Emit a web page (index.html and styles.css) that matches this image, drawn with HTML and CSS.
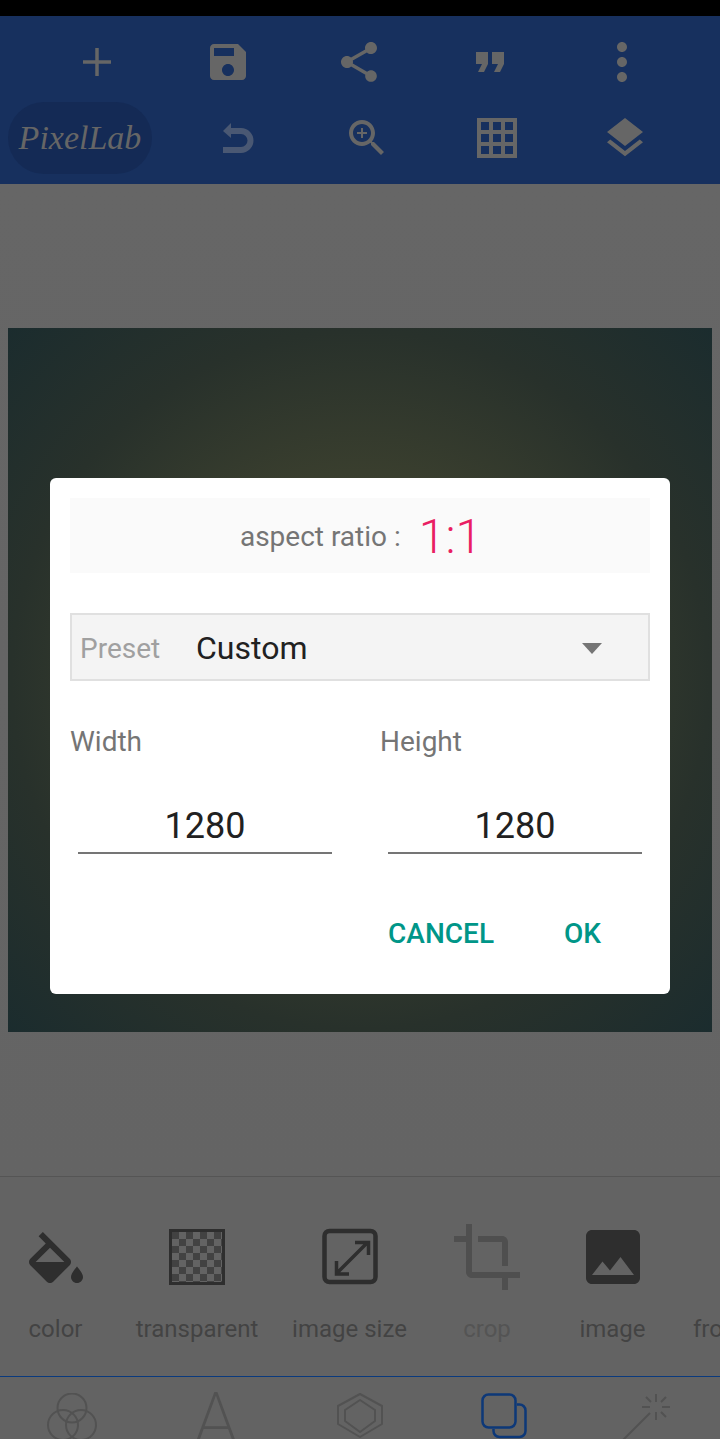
FILE: index.html
```html
<!DOCTYPE html>
<html lang="en">
<head>
    <meta charset="UTF-8">
    <meta name="viewport" content="width=device-width, initial-scale=1.0">
    <title>PixelLab</title>
    <link rel="stylesheet" href="styles.css">
</head>
<body>
<div class="app">

    <div class="status-bar"></div>

    <!-- Top toolbar, two rows of actions -->
    <header class="toolbar">
        <div class="toolbar-row toolbar-row-top">
            <svg class="icon-60" viewBox="0 0 24 24"><path d="M17.600 12.700h-4.900v4.900h-1.400v-4.900H6.400v-1.400h4.900V6.400h1.400v4.900h4.900z"/></svg>
            <svg class="icon-48" viewBox="0 0 24 24"><path d="M17 3H5c-1.110 0-2 .9-2 2v14c0 1.100.89 2 2 2h14c1.100 0 2-.9 2-2V7l-4-4zm-5 16c-1.660 0-3-1.340-3-3s1.340-3 3-3 3 1.340 3 3-1.340 3-3 3zm3-10H5V5h10v4z"/></svg>
            <svg class="icon-48" viewBox="0 0 24 24"><path d="M18 16.080c-.76 0-1.440.3-1.960.77L8.910 12.700c.05-.23.09-.46.09-.7s-.04-.47-.09-.7l7.050-4.110c.54.5 1.250.81 2.040.81 1.660 0 3-1.340 3-3s-1.340-3-3-3-3 1.340-3 3c0 .24.04.47.09.7L8.040 9.810C7.500 9.310 6.790 9 6 9c-1.660 0-3 1.340-3 3s1.340 3 3 3c.79 0 1.500-.31 2.040-.81l7.120 4.160c-.05.21-.08.43-.08.65 0 1.610 1.310 2.920 2.920 2.920 1.610 0 2.920-1.310 2.920-2.920s-1.310-2.920-2.920-2.920z"/></svg>
            <svg class="icon-48" viewBox="0 0 24 24"><path d="M6 17h3l2-4V7H5v6h3zm8 0h3l2-4V7h-6v6h3z"/></svg>
            <svg class="icon-60" viewBox="0 0 24 24"><path d="M12 8c1.100 0 2-.9 2-2s-.9-2-2-2-2 .9-2 2 .9 2 2 2zm0 2c-1.100 0-2 .9-2 2s.9 2 2 2 2-.9 2-2-.9-2-2-2zm0 6c-1.100 0-2 .9-2 2s.9 2 2 2 2-.9 2-2-.9-2-2-2z"/></svg>
        </div>
        <div class="toolbar-row toolbar-row-bottom">
            <div class="logo-pill"><span class="logo-text">PixelLab</span></div>
            <!-- undo is greyed out, nothing to undo yet -->
            <svg class="undo" viewBox="0 0 32 32">
                <polygon points="9,1 1,9 9,16"/>
                <path d="M7 9H19a9.500 9.500 0 0 1 0 19H1"/>
            </svg>
            <svg class="icon-48" viewBox="0 0 24 24"><path d="M15.500 14h-.79l-.28-.27C15.410 12.590 16 11.110 16 9.500 16 5.910 13.090 3 9.500 3S3 5.910 3 9.500 5.910 16 9.500 16c1.610 0 3.090-.59 4.230-1.570l.27.28v.79l5 4.990L20.490 19l-4.990-5zm-6 0C7.010 14 5 11.990 5 9.500S7.010 5 9.500 5 14 7.010 14 9.500 11.990 14 9.500 14z"/><path d="M12 10h-2v2H9v-2H7V9h2V7h1v2h2v1z"/></svg>
            <svg class="grid-icon" viewBox="0 0 40 40">
                <path d="M2 2h36v36H2zM14 2v36M26 2v36M2 14h36M2 26h36"/>
            </svg>
            <svg class="icon-48" viewBox="0 0 24 24"><path d="M11.990 18.540l-7.370-5.730L3 14.070l9 7 9-7-1.630-1.270-7.380 5.740zM12 16l7.360-5.730L21 9l-9-7-9 7 1.630 1.270L12 16z"/></svg>
        </div>
    </header>

    <!-- Workspace with the square canvas -->
    <main class="workspace">
        <div class="canvas"></div>
    </main>

    <!-- Options of the selected tab -->
    <section class="tray">
        <div class="tray-item">
            <svg class="tray-icon" viewBox="0 -3.670 24 24"><path d="M16.560 8.940L7.620 0 6.210 1.410l2.380 2.380-5.150 5.150c-.59.59-.59 1.540 0 2.120l5.500 5.500c.29.29.68.44 1.060.44s.77-.15 1.060-.44l5.500-5.500c.59-.58.59-1.530 0-2.110zM5.210 10L10 5.210 14.790 10H5.210zM19 11.500s-2 2.170-2 3.500c0 1.100.9 2 2 2s2-.9 2-2c0-1.330-2-3.500-2-3.500z"/></svg>
            <span>color</span>
        </div>
        <div class="tray-item">
            <div class="tray-icon-box"><div class="checker"></div></div>
            <span>transparent</span>
        </div>
        <div class="tray-item">
            <svg class="tray-icon size-icon" viewBox="0 0 72 72">
                <rect x="10.500" y="10" width="51" height="51" rx="5"/>
                <path class="size-arrow" d="M22 53L54 21M41 21.500H54.500V34M22.500 40V53H35"/>
            </svg>
            <span>image size</span>
        </div>
        <div class="tray-item tray-item-off">
            <svg class="tray-icon" viewBox="0 0 24 24"><path d="M17 15h2V7c0-1.100-.9-2-2-2H9v2h8v8zM7 17V1H5v4H1v2h4v10c0 1.100.9 2 2 2h10v4h2v-4h4v-2H7z"/></svg>
            <span>crop</span>
        </div>
        <div class="tray-item">
            <svg class="tray-icon" viewBox="0 0 24 24"><path d="M21 19V5c0-1.100-.9-2-2-2H5c-1.100 0-2 .9-2 2v14c0 1.100.9 2 2 2h14c1.100 0 2-.9 2-2zM8.500 13.500l2.500 3.010L14.500 12l4.500 6H5l3.500-4.500z"/></svg>
            <span>image</span>
        </div>
        <div class="tray-item tray-item-cut">
            <div class="tray-icon-box"></div>
            <span>from</span>
        </div>
    </section>

    <!-- Bottom tabs, cut off by the screen edge -->
    <nav class="tabs">
        <svg class="tab-icon" viewBox="0 0 72 62">
            <circle cx="36" cy="15" r="14.500"/>
            <circle cx="27" cy="32" r="15"/>
            <circle cx="45" cy="32" r="15"/>
        </svg>
        <div class="tab-letter">A</div>
        <svg class="tab-icon" viewBox="0 0 72 62">
            <polygon points="36,1 58,13 58,31 36,44 14,31 14,13" stroke-linejoin="round"/>
            <polygon points="36,7 51,17 51,28 36,39 21,28 21,17" stroke-linejoin="round"/>
        </svg>
        <svg class="tab-icon tab-icon-on" viewBox="0 0 72 62">
            <path d="M49 11.500h2.500a6 6 0 0 1 6 6V38a6 6 0 0 1-6 6h-20a6 6 0 0 1-6-6V36"/>
            <rect x="14.500" y="1.500" width="33" height="33" rx="6"/>
        </svg>
        <svg class="tab-icon" viewBox="0 0 72 62">
            <path d="M11 47L38 20M44 1v8M44 19v8M30 14h8M50 14h8M34 4l5 5M54 4l-5 5M49 19l5 5"/>
        </svg>
    </nav>

    <!-- New image dialog -->
    <div class="dialog">
        <div class="ratio-bar">
            <span class="ratio-label">aspect ratio :</span>
            <span class="ratio-value">1:1</span>
        </div>

        <div class="preset">
            <span class="preset-label">Preset</span>
            <span class="preset-value">Custom</span>
            <span class="preset-arrow"></span>
        </div>

        <div class="size-fields">
            <div class="size-field">
                <div class="size-label">Width</div>
                <div class="size-input">1280</div>
            </div>
            <div class="size-field">
                <div class="size-label">Height</div>
                <div class="size-input">1280</div>
            </div>
        </div>

        <div class="dialog-actions">
            <span class="dialog-btn">CANCEL</span>
            <span class="dialog-btn">OK</span>
        </div>
    </div>

</div>
</body>
</html>
```

FILE: styles.css
```css
/* Base */
* {
    box-sizing: border-box;
}

body {
    margin: 0;
    font-family: 'Roboto', sans-serif;
    background-color: #000;
}

.app {
    position: relative;
    display: flex;
    flex-direction: column;
    width: 720px;
    height: 1439px;
    overflow: hidden;
    background-color: #666;
}

.status-bar {
    height: 16px;
    background-color: #000;
}

/* Toolbar */
.toolbar {
    height: 168px;
    padding: 16px 0 10px;
    background-color: #17305e;
    fill: #666;
}

.toolbar-row {
    display: grid;
    align-items: center;
    justify-items: center;
}

.toolbar-row-top {
    grid-template-columns: repeat(5, 131.250px);
    height: 60px;
    padding-left: 31px;
}

.toolbar-row-bottom {
    grid-template-columns: 160px 156px 102px 158px 98px;
    height: 72px;
    margin-top: 10px;
}

.icon-48 {
    width: 48px;
    height: 48px;
}

.icon-60 {
    width: 60px;
    height: 60px;
}

.logo-pill {
    display: flex;
    align-items: center;
    justify-content: center;
    width: 144px;
    height: 72px;
    border-radius: 36px;
    background-color: #142a55;
}

.logo-text {
    font-family: 'Liberation Serif', serif;
    font-style: italic;
    font-size: 34px;
    color: #666;
}

.undo {
    width: 32px;
    height: 32px;
    fill: #4a5873;
}

.undo path {
    fill: none;
    stroke: #4a5873;
    stroke-width: 6;
}

.grid-icon {
    width: 40px;
    height: 40px;
    fill: none;
    stroke: #666;
    stroke-width: 4;
}

/* Workspace */
.workspace {
    flex: 1;
    display: flex;
    align-items: center;
    justify-content: center;
    background: linear-gradient(#666, #646464);
}

.canvas {
    width: 704px;
    height: 704px;
    background: radial-gradient(circle farthest-corner at 50% 50%, #444533 0%, #393e2e 42%, #28312b 70%, #1b2c2e 100%);
}

/* Tray of options */
.tray {
    display: grid;
    grid-template-columns: 111px 172px 133px 142px 109px auto;
    height: 200px;
    padding-top: 44px;
    border-top: 1px solid #555;
    background-color: #636363;
    fill: #2e2e2e;
    white-space: nowrap;
}

.tray-item {
    display: flex;
    flex-direction: column;
    align-items: center;
    font-size: 24px;
    color: #434343;
}

.tray-item span {
    margin-top: 20px;
    line-height: 32px;
}

.tray-item-off {
    fill: #4f4f4f;
    color: #545454;
}

.tray-item-cut {
    align-items: flex-start;
    padding-left: 26px;
}

.tray-icon,
.tray-icon-box {
    display: flex;
    align-items: center;
    justify-content: center;
    width: 72px;
    height: 72px;
}

.checker {
    flex-shrink: 0;
    width: 56px;
    height: 56px;
    border: 3px solid #2e2e2e;
    background: repeating-conic-gradient(#636363 0 25%, #424242 0 50%) 0 0 / 14px 14px;
}

.size-icon {
    fill: none;
    stroke: #2e2e2e;
    stroke-width: 4.500;
}

.size-arrow {
    stroke-width: 3.500;
}

/* Tabs */
.tabs {
    display: grid;
    grid-template-columns: repeat(5, 144px);
    justify-items: center;
    height: 63px;
    padding-top: 16px;
    border-top: 1px solid #0a3a7e;
    background-color: #636363;
}

.tab-icon {
    width: 72px;
    height: 62px;
    fill: none;
    stroke: #525252;
    stroke-width: 2;
}

.tab-icon-on {
    stroke: #0d3878;
    stroke-width: 2.500;
}

.tab-letter {
    font-weight: 200;
    font-size: 72px;
    line-height: 54px;
    color: #525252;
}

/* Dialog */
.dialog {
    position: absolute;
    top: 478px;
    left: 50px;
    width: 620px;
    height: 516px;
    padding: 20px;
    border-radius: 6px;
    background-color: #fff;
}

.ratio-bar {
    display: flex;
    align-items: center;
    justify-content: center;
    gap: 18px;
    height: 75px;
    padding: 2px 0 0 2px;
    background-color: #fafafa;
}

.ratio-label {
    font-size: 28px;
    color: #757575;
}

.ratio-value {
    font-weight: 300;
    font-size: 48px;
    color: #e91e63;
}

.preset {
    display: flex;
    align-items: center;
    height: 68px;
    margin-top: 40px;
    padding: 2px 46px 0 8px;
    border: 2px solid #e0e0e0;
    background-color: #f4f4f4;
}

.preset-label {
    width: 116px;
    font-size: 28px;
    color: #a0a0a0;
}

.preset-value {
    flex: 1;
    font-size: 32px;
    color: #212121;
}

.preset-arrow {
    width: 0;
    height: 0;
    border-left: 10px solid transparent;
    border-right: 10px solid transparent;
    border-top: 11px solid #757575;
}

.size-fields {
    display: grid;
    grid-template-columns: 270px 270px;
    gap: 40px;
    margin-top: 41px;
}

.size-label {
    font-size: 28px;
    line-height: 40px;
    color: #757575;
}

.size-input {
    height: 49px;
    margin: 43px 8px 0;
    border-bottom: 2px solid #757575;
    font-size: 36px;
    line-height: 42px;
    text-align: center;
    color: #212121;
}

.dialog-actions {
    display: flex;
    justify-content: flex-end;
    gap: 70px;
    margin-top: 60px;
    padding-right: 49px;
}

.dialog-btn {
    font-weight: 500;
    font-size: 28px;
    line-height: 40px;
    color: #009688;
}
```
